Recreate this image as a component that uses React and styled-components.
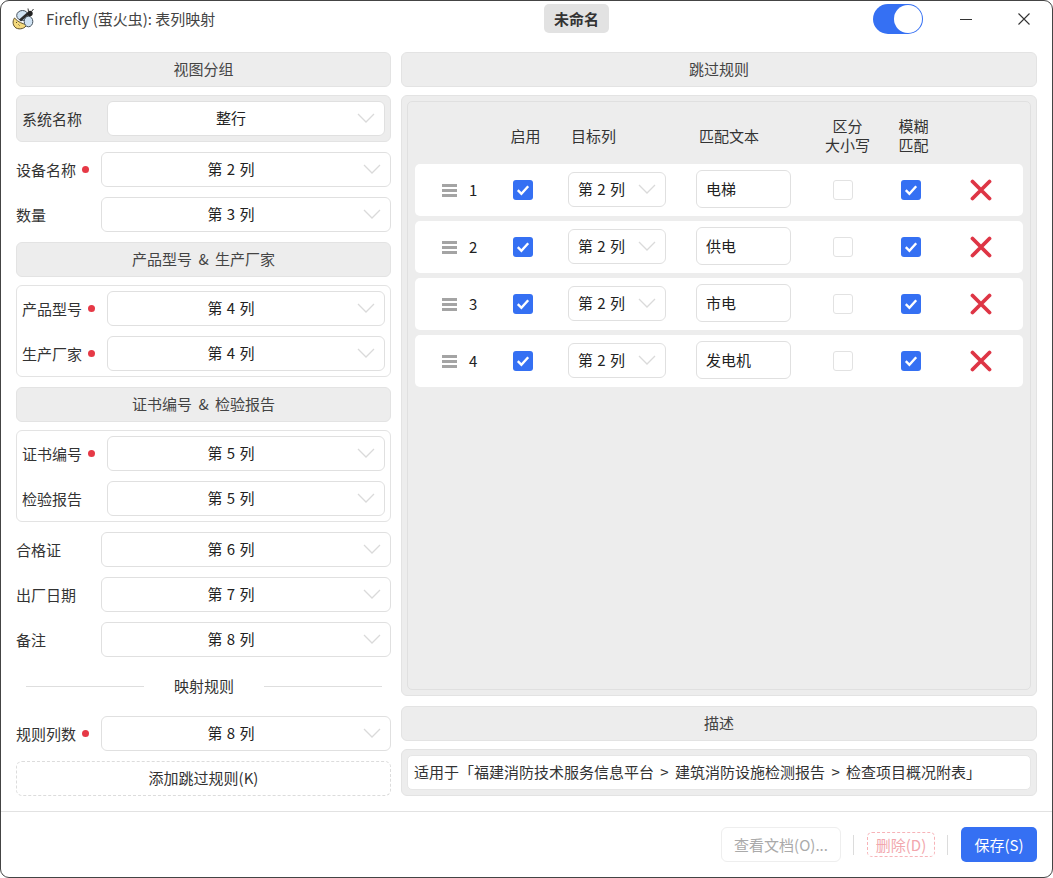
import React from 'react';
import styled, {createGlobalStyle} from 'styled-components';

const GlobalStyle = createGlobalStyle`
    html, body {
        margin: 0;
        padding: 0;
        background: white;
    }
    body {
        font-family: "Noto Sans CJK SC", "Open Sans", sans-serif;
        font-size: 15px;
        color: #333;
    }
    * {
        box-sizing: border-box;
    }
`;

const Window = styled.div`
    width: 1053px;
    height: 878px;
    display: flex;
    flex-direction: column;
    border: 1px solid #444;
    border-top-width: 1.5px;
    border-radius: 9px;
    background: white;
    overflow: hidden;
`;

const TitleBar = styled.header`
    height: 37px;
    flex: none;
    display: flex;
    align-items: center;
`;

const TitleLeft = styled.div`
    width: 543px;
    display: flex;
    align-items: center;
    gap: 11px;
    padding-left: 11px;
    color: #444;
`;

const TitleText = styled.span`
    padding-bottom: 3px;
`;

const TitlePill = styled.div`
    width: 65px;
    height: 29px;
    margin-top: -2px;
    padding-bottom: 1px;
    display: flex;
    align-items: center;
    justify-content: center;
    background: #e2e2e2;
    border-radius: 5px;
    font-weight: 700;
    color: #333;
`;

const Toggle = styled.div`
    width: 50px;
    height: 30px;
    margin: -2px 0 0 264px;
    padding: 1px;
    display: flex;
    justify-content: flex-end;
    background: #3570f3;
    border-radius: 15px;
`;

const ToggleKnob = styled.div`
    width: 28px;
    height: 28px;
    border-radius: 50%;
    background: white;
`;

const WinButton = styled.button`
    width: 12px;
    height: 12px;
    margin: 0 0 2px ${p => p.$gap}px;
    padding: 0;
    border: none;
    background: none;
    display: block;
    > svg {
        display: block;
    }
`;

const Main = styled.main`
    flex: 1;
    min-height: 0;
    display: flex;
    gap: 10px;
    padding: 14px 15px 15px;
`;

const LeftColumn = styled.section`
    width: 375px;
    flex: none;
    display: flex;
    flex-direction: column;
    gap: 10px;
`;

const RightColumn = styled.section`
    flex: 1;
    min-width: 0;
    display: flex;
    flex-direction: column;
    gap: 10px;
`;

const SectionHeader = styled.div`
    height: 35px;
    flex: none;
    margin-bottom: -2px;
    padding-bottom: 2px;
    display: flex;
    align-items: center;
    justify-content: center;
    background: #ededed;
    border: 1px solid #e3e3e3;
    border-radius: 6px;
    color: #444;
    word-spacing: 3px;
    white-space: pre;
`;

const Group = styled.div`
    display: flex;
    flex-direction: column;
    gap: 10px;
    padding: 5px;
    background: ${p => p.$filled ? '#ededed' : 'white'};
    border: 1px solid #e3e3e3;
    border-radius: 6px;
`;

const FieldRow = styled.div`
    display: flex;
    align-items: center;
`;

const FieldLabel = styled.label`
    width: 85px;
    flex: none;
    display: flex;
    align-items: center;
    gap: 6px;
    color: #333;
`;

const RequiredDot = styled.span`
    width: 7px;
    height: 7px;
    border-radius: 50%;
    background: #e63946;
`;

const Select = styled.div`
    position: relative;
    flex: 1;
    width: ${p => p.$compact ? '98px' : 'auto'};
    height: 35px;
    display: flex;
    align-items: center;
    justify-content: ${p => p.$compact ? 'flex-start' : 'center'};
    padding: ${p => p.$compact ? '0 0 2px 9px' : '0 30px 2px 0'};
    background: white;
    border: 1px solid #e0e0e0;
    border-radius: 6px;
    color: #222;
    word-spacing: 1px;
    white-space: pre;
    > svg {
        position: absolute;
        right: 9px;
        top: 11px;
    }
`;

const Divider = styled.div`
    height: 39px;
    display: flex;
    align-items: center;
    gap: 30px;
    padding: 0 9px 0 10px;
    color: #333;
    &::before, &::after {
        content: "";
        flex: 1;
        height: 1px;
        background: #dedede;
    }
`;

const DividerText = styled.span`
    padding-bottom: 2px;
`;

const DashedButton = styled.button`
    height: 35px;
    padding: 0 0 2px;
    background: white;
    border: 1px dashed #dcdcdc;
    border-radius: 6px;
    font: inherit;
    color: #333;
`;

const Panel = styled.div`
    flex: ${p => p.$grow ? 1 : 'none'};
    min-height: 0;
    display: flex;
    padding: 5px;
    background: #ededed;
    border: 1px solid #e3e3e3;
    border-radius: 6px;
`;

const RuleBoard = styled.div`
    flex: 1;
    padding: 6px 7px;
    background: #ededed;
    border: 1px solid #e0e0e0;
    border-radius: 5px;
`;

const ruleColumns = '88px 40px 153px 107px 80px 56px 84px';

const RuleHeader = styled.div`
    height: 56px;
    padding-bottom: 2px;
    display: grid;
    grid-template-columns: ${ruleColumns};
    align-items: center;
    line-height: 19px;
    color: #333;
`;

const HeaderCell = styled.div`
    grid-column: ${p => p.$column};
    text-align: ${p => p.$left ? 'left' : 'center'};
    padding-left: ${p => p.$indent || 0}px;
`;

const RuleList = styled.div`
    display: flex;
    flex-direction: column;
    gap: 5px;
`;

const RuleRow = styled.div`
    height: 52px;
    display: grid;
    grid-template-columns: ${ruleColumns};
    align-items: center;
    background: white;
    border-radius: 5px;
`;

const IndexCell = styled.div`
    display: flex;
    align-items: center;
    gap: 12px;
    padding-left: 27px;
    color: #222;
`;

const RowNumber = styled.span`
    padding-bottom: 2px;
`;

const DragHandle = styled.div`
    width: 15px;
    height: 13px;
    flex: none;
    display: flex;
    flex-direction: column;
    justify-content: space-between;
    > span {
        height: 3px;
        background: #a4a4a4;
    }
`;

const CenterCell = styled.div`
    display: flex;
    justify-content: center;
    align-items: center;
`;

const TargetCell = styled.div`
    padding-left: 25px;
    margin-bottom: 2px;
`;

const TextCell = styled.div`
    margin-bottom: 2px;
`;

const Checkbox = styled.div`
    width: 20px;
    height: 20px;
    display: flex;
    align-items: center;
    justify-content: center;
    background: ${p => p.$checked ? '#3570f3' : 'white'};
    border: ${p => p.$checked ? 'none' : '1px solid #e2e2e2'};
    border-radius: 3px;
`;

const TextInput = styled.div`
    width: 95px;
    height: 38px;
    display: flex;
    align-items: center;
    padding: 0 0 2px 9px;
    background: white;
    border: 1px solid #e0e0e0;
    border-radius: 6px;
    color: #222;
`;

const DescriptionInput = styled.div`
    flex: 1;
    height: 35px;
    display: flex;
    align-items: center;
    padding: 0 0 3px 6px;
    background: white;
    border: 1px solid #e6e6e6;
    border-radius: 5px;
    color: #333;
    word-spacing: 3px;
    white-space: pre;
`;

const Footer = styled.footer`
    height: 66px;
    flex: none;
    display: flex;
    align-items: center;
    justify-content: flex-end;
    gap: 12px;
    padding: 0 15px;
    border-top: 1px solid #e2e2e2;
`;

const FooterDivider = styled.span`
    width: 1px;
    height: 20px;
    background: #dcdcdc;
`;

const DocButton = styled.button`
    width: 120px;
    height: 35px;
    background: white;
    border: 1px solid #eeeeee;
    border-radius: 6px;
    font: inherit;
    color: #aaa;
`;

const DeleteButton = styled.button`
    width: 68px;
    height: 25px;
    margin-left: 1px;
    padding: 0;
    background: white;
    border: 1px dashed #f7b3b8;
    border-radius: 5px;
    font: inherit;
    color: #f2a7ad;
`;

const SaveButton = styled.button`
    width: 76px;
    height: 35px;
    margin-left: 1px;
    background: #3570f3;
    border: none;
    border-radius: 5px;
    font: inherit;
    color: white;
`;

const Chevron = () => (
    <svg width="18" height="10" viewBox="0 0 18 10" fill="none">
        <path d="M1 1l8 8 8-8" stroke="#dadada" strokeWidth="1.3" />
    </svg>
);

const Check = () => (
    <svg width="14" height="12" viewBox="0 0 14 12" fill="none">
        <path d="M1.8 6.2l3.6 3.6 6.8-7.6" stroke="white" strokeWidth="2.4" />
    </svg>
);

const DeleteIcon = () => (
    <svg width="22" height="22" viewBox="0 0 22 22" fill="none">
        <path d="M2.5 2.5l17 17M19.5 2.5l-17 17" stroke="#de3545" strokeWidth="3.8" strokeLinecap="round" />
    </svg>
);

const FireflyLogo = () => (
    <svg width="23" height="24" viewBox="0 0 23 24" fill="none">
        <path d="M2.500 10c-2.500 3.500-1.500 8 1.500 10 4 2 9 .5 11-3.500-4.500-.5-9-2.500-12.500-6.500z" fill="#f4d97c" stroke="#5d4f2a" strokeWidth="1" />
        <ellipse cx="10.500" cy="7.500" rx="5.800" ry="5" fill="#cfe2f3" stroke="#46525c" strokeWidth="1" />
        <ellipse cx="16.500" cy="13.500" rx="4.300" ry="5.300" fill="#cfe2f3" stroke="#46525c" strokeWidth="1" />
        <path d="M8 12.500l8-7" stroke="#2c2c2c" strokeWidth="2.800" />
        <circle cx="18" cy="5.500" r="2.700" fill="#222" />
        <path d="M16.500 3.500l-.5-3M19.500 3.500l2-2.500" stroke="#333" strokeWidth="1" />
        <path d="M4 14l1 1M6.500 16.500l1 1" stroke="#5d4f2a" strokeWidth="1" />
    </svg>
);

const Field = ({label, required, value}) => (
    <FieldRow>
        <FieldLabel>
            {label}
            {required && <RequiredDot />}
        </FieldLabel>
        <Select>
            {value}
            <Chevron />
        </Select>
    </FieldRow>
);

const rules = ['电梯', '供电', '市电', '发电机'];

export default function App() {
    return (
        <Window>
            <GlobalStyle />
            <TitleBar>
                <TitleLeft>
                    <FireflyLogo />
                    <TitleText>Firefly (萤火虫): 表列映射</TitleText>
                </TitleLeft>
                <TitlePill>未命名</TitlePill>
                <Toggle>
                    <ToggleKnob />
                </Toggle>
                <WinButton $gap={37}>
                    <svg width="12" height="12" viewBox="0 0 12 12">
                        <path d="M0 6.500h12" stroke="#333" strokeWidth="1.2" />
                    </svg>
                </WinButton>
                <WinButton $gap={46}>
                    <svg width="12" height="12" viewBox="0 0 12 12">
                        <path d="M.5.500l11 11M11.500.500l-11 11" stroke="#333" strokeWidth="1.1" />
                    </svg>
                </WinButton>
            </TitleBar>
            <Main>
                <LeftColumn>
                    <SectionHeader>视图分组</SectionHeader>
                    <Group $filled>
                        <Field label="系统名称" value="整行" />
                    </Group>
                    <Field label="设备名称" required value="第 2 列" />
                    <Field label="数量" value="第 3 列" />
                    <SectionHeader>产品型号 &amp; 生产厂家</SectionHeader>
                    <Group>
                        <Field label="产品型号" required value="第 4 列" />
                        <Field label="生产厂家" required value="第 4 列" />
                    </Group>
                    <SectionHeader>证书编号 &amp; 检验报告</SectionHeader>
                    <Group>
                        <Field label="证书编号" required value="第 5 列" />
                        <Field label="检验报告" value="第 5 列" />
                    </Group>
                    <Field label="合格证" value="第 6 列" />
                    <Field label="出厂日期" value="第 7 列" />
                    <Field label="备注" value="第 8 列" />
                    <Divider><DividerText>映射规则</DividerText></Divider>
                    <Field label="规则列数" required value="第 8 列" />
                    <DashedButton>添加跳过规则(K)</DashedButton>
                </LeftColumn>
                <RightColumn>
                    <SectionHeader>跳过规则</SectionHeader>
                    <Panel $grow>
                        <RuleBoard>
                            <RuleHeader>
                                <HeaderCell $column={2} $indent={5}>启用</HeaderCell>
                                <HeaderCell $column={3} $left $indent={28}>目标列</HeaderCell>
                                <HeaderCell $column={4} $left $indent={3}>匹配文本</HeaderCell>
                                <HeaderCell $column={5} $indent={9}>区分<br />大小写</HeaderCell>
                                <HeaderCell $column={6} $indent={5}>模糊<br />匹配</HeaderCell>
                            </RuleHeader>
                            <RuleList>
                                {rules.map((text, i) => (
                                    <RuleRow key={text}>
                                        <IndexCell>
                                            <DragHandle><span /><span /><span /></DragHandle>
                                            <RowNumber>{i + 1}</RowNumber>
                                        </IndexCell>
                                        <CenterCell><Checkbox $checked><Check /></Checkbox></CenterCell>
                                        <TargetCell>
                                            <Select $compact>
                                                第 2 列
                                                <Chevron />
                                            </Select>
                                        </TargetCell>
                                        <TextCell><TextInput>{text}</TextInput></TextCell>
                                        <CenterCell><Checkbox /></CenterCell>
                                        <CenterCell><Checkbox $checked><Check /></Checkbox></CenterCell>
                                        <CenterCell><DeleteIcon /></CenterCell>
                                    </RuleRow>
                                ))}
                            </RuleList>
                        </RuleBoard>
                    </Panel>
                    <SectionHeader>描述</SectionHeader>
                    <Panel>
                        <DescriptionInput>适用于「福建消防技术服务信息平台 &gt; 建筑消防设施检测报告 &gt; 检查项目概况附表」</DescriptionInput>
                    </Panel>
                </RightColumn>
            </Main>
            <Footer>
                <DocButton>查看文档(O)...</DocButton>
                <FooterDivider />
                <DeleteButton>删除(D)</DeleteButton>
                <FooterDivider />
                <SaveButton>保存(S)</SaveButton>
            </Footer>
        </Window>
    );
}
